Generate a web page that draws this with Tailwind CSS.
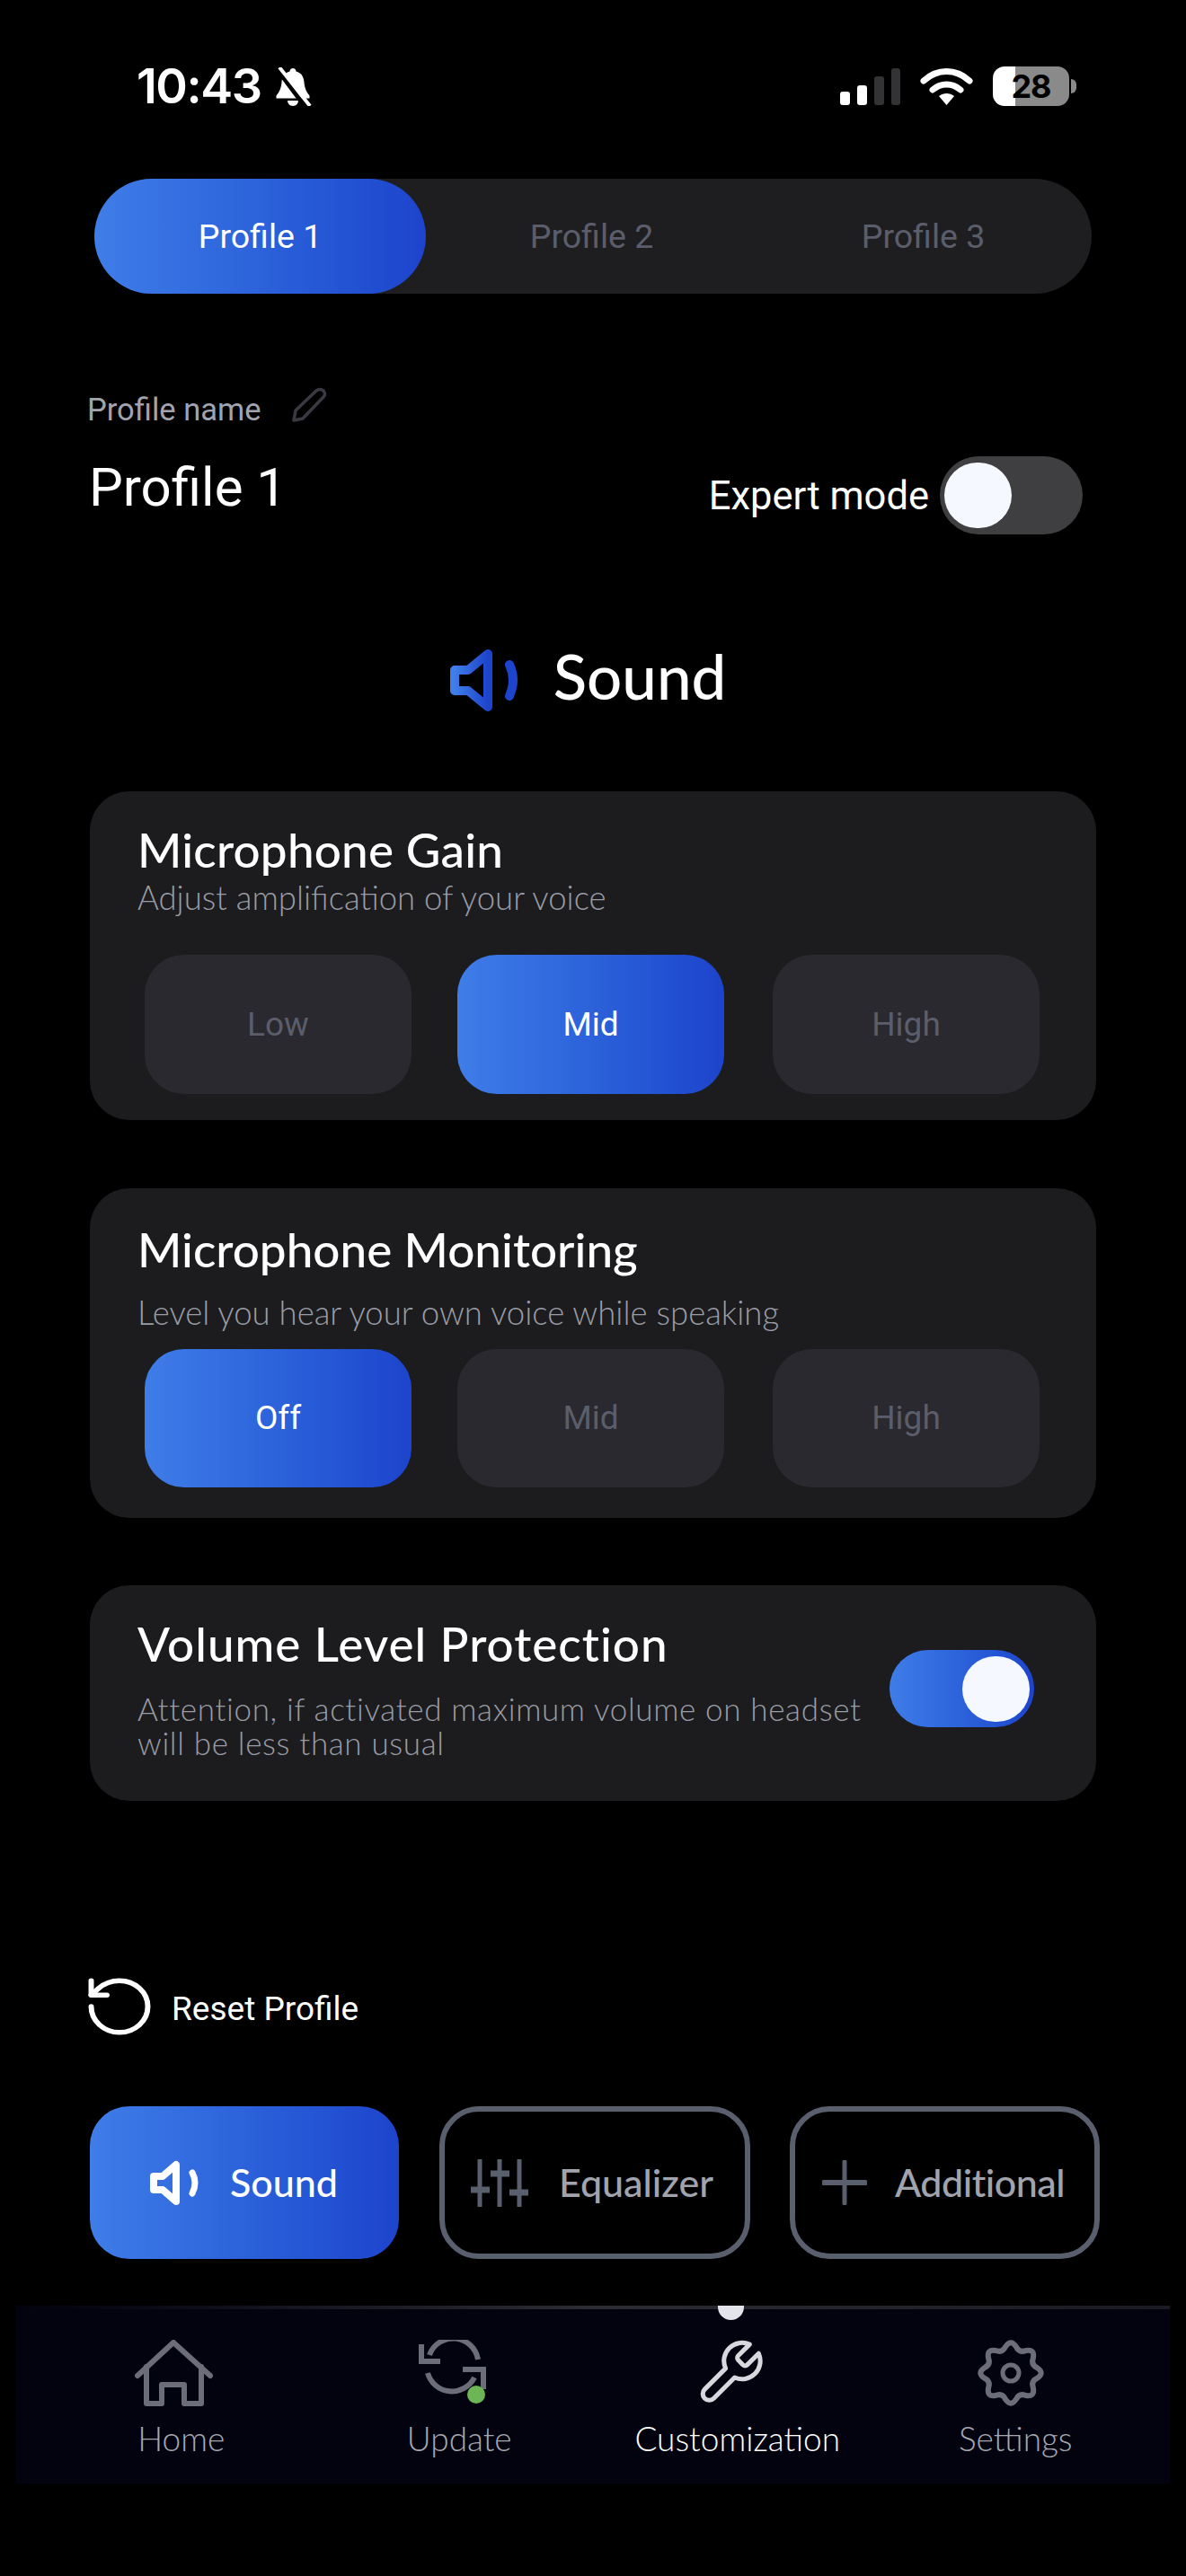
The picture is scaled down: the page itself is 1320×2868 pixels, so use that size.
<!DOCTYPE html>
<html lang="en">
<head>
  <meta charset="UTF-8">
  <meta name="viewport" content="width=device-width, initial-scale=1.0">
  <title>Customization - Sound</title>
  <script src="https://cdn.jsdelivr.net/npm/@tailwindcss/browser@4"></script>
</head>
<body class="bg-black font-['Roboto',sans-serif] text-white">
  <svg class="absolute w-0 h-0">
    <defs>
      <linearGradient id="blue" x1="0" y1="0" x2="1" y2="0">
        <stop offset="0" stop-color="#3f7de8"/>
        <stop offset="1" stop-color="#1d44cc"/>
      </linearGradient>
    </defs>
  </svg>
  <div class="w-[1320px] h-[2868px] overflow-hidden flex flex-col">

    <!-- status bar -->
    <div class="h-[199px] flex items-start justify-between pl-[152px] pr-[122px] pt-[70px]">
      <div class="flex items-center gap-[14px] h-[52px]">
        <span class="font-['Inter',sans-serif] font-semibold text-[54px] leading-[52px] tracking-[-1.500px]">10:43</span>
        <svg class="w-[42px] h-[43px]" viewBox="0 0 42 43">
          <path d="M21 1c2 0 3.500 1.500 3.500 3.500 6 1.500 8.500 6 9 12 .5 6 2 10 6 15v3H2.500v-3c4-5 5.500-9 6-15 .5-6 3-10.500 9-12C17.500 2.500 19 1 21 1z" fill="#fff"/>
          <path d="M15 37h12c0 3-2.500 6-6 6s-6-3-6-6z" fill="#fff"/>
          <path d="M2 0 34 43" stroke="#000" stroke-width="5"/>
          <path d="M6 0 40 43" stroke="#fff" stroke-width="4"/>
        </svg>
      </div>
      <div class="flex items-start gap-[22px]">
        <div class="flex items-end gap-[8px] h-[41px] mt-[6px]">
          <div class="w-[11px] h-[15px] rounded-[3px] bg-white"></div>
          <div class="w-[11px] h-[22px] rounded-[3px] bg-white"></div>
          <div class="w-[11px] h-[32px] rounded-[3px] bg-[#333336]"></div>
          <div class="w-[10px] h-[41px] rounded-[3px] bg-[#333336]"></div>
        </div>
        <svg class="w-[59px] h-[42px] mt-[5px]" viewBox="0 0 59 42">
          <path d="M4 15C19 1 40 1 55 15" fill="none" stroke="#fff" stroke-width="7" stroke-linecap="round"/>
          <path d="M14 25c9-8 22-8 31 0" fill="none" stroke="#fff" stroke-width="7" stroke-linecap="round"/>
          <path d="M21 32c5-4 12-4 17 0L29.500 42z" fill="#fff"/>
        </svg>
        <div class="flex items-center mt-[4px]">
          <div class="w-[85px] h-[44px] rounded-[13px] bg-[linear-gradient(90deg,#fff_0,#fff_30%,#8a8a8a_30%)] flex items-center justify-center font-['Inter',sans-serif] font-bold text-[36px] leading-none text-black tracking-[-1px]">28</div>
          <div class="w-[6px] h-[16px] ml-[2px] rounded-r-full bg-[#8a8a8a]"></div>
        </div>
      </div>
    </div>

    <!-- profile tabs -->
    <div class="ml-[105px] w-[1110px] h-[128px] rounded-[64px] bg-[#1e1e21] flex items-center text-[37.500px] text-[#5b5e6a]">
      <div class="w-[369px] h-full rounded-[64px] bg-linear-to-r from-[#3f7de8] to-[#1d44cc] text-white flex items-center justify-center">Profile 1</div>
      <div class="w-[369px] text-center">Profile 2</div>
      <div class="w-[369px] text-center">Profile 3</div>
    </div>

    <!-- profile name -->
    <div class="mt-[104px] ml-[97px] w-[1108px] h-[164px] flex justify-between">
      <div>
        <div class="flex items-end h-[40px] gap-[33px]">
          <span class="text-[34.500px] leading-[40px] text-[#a2a4ad] translate-y-[5px]">Profile name</span>
          <svg class="w-[40px] h-[40px]" viewBox="0 0 40 40">
            <path d="M3 37 5 26 28 4q4-3 8 0 3 4 0 7L13 35z" fill="none" stroke="#3a3b42" stroke-width="3.500" stroke-linejoin="round"/>
          </svg>
        </div>
        <div class="mt-[39px] ml-[2px] text-[60px] leading-[66px] font-normal">Profile 1</div>
      </div>
      <div class="flex items-end gap-[12px]">
        <span class="text-[43.500px] leading-[60px] mb-[12px]">Expert mode</span>
        <div class="w-[159px] h-[87px] rounded-full bg-[#3f3f42] flex items-center pl-[5px]">
          <div class="w-[75px] h-[73px] rounded-full bg-[#f5f8fe]"></div>
        </div>
      </div>
    </div>

    <!-- section title -->
    <div class="mt-[127px] h-[71px] flex items-center justify-center gap-[39px] pr-[11px]">
      <svg class="w-[76px] h-[71px]" viewBox="0 0 76 71">
        <path d="M5 24H20L42 6V65L20 47H5z" fill="none" stroke="url(#blue)" stroke-width="10" stroke-linejoin="round"/>
        <path d="M66 18q8 17 0 35" fill="none" stroke="#1d44cc" stroke-width="10" stroke-linecap="round"/>
      </svg>
      <span class="font-['Lato',sans-serif] font-medium text-[69px] leading-[71px] -translate-y-[5px]">Sound</span>
    </div>

    <!-- Microphone Gain -->
    <div class="mt-[88px] ml-[100px] w-[1120px] h-[366px] rounded-[44px] bg-[#1c1c1f] pl-[53px] pt-[39px]">
      <div class="font-['Lato',sans-serif] font-medium text-[53px] leading-[52px] tracking-[0.200px]">Microphone Gain</div>
      <div class="mt-[9px] font-['Lato',sans-serif] font-light text-[36.500px] leading-[36px] text-[#9a9ca5]">Adjust amplification of your voice</div>
      <div class="mt-[46px] ml-[8px] flex text-[37px]">
        <div class="w-[297px] h-[155px] rounded-[44px] bg-[#29292f] text-[#5b5e6a] flex items-center justify-center">Low</div>
        <div class="ml-[51px] w-[297px] h-[155px] rounded-[44px] bg-linear-to-r from-[#3f7de8] to-[#1d44cc] flex items-center justify-center">Mid</div>
        <div class="ml-[54px] w-[297px] h-[155px] rounded-[44px] bg-[#29292f] text-[#5b5e6a] flex items-center justify-center">High</div>
      </div>
    </div>

    <!-- Microphone Monitoring -->
    <div class="mt-[76px] ml-[100px] w-[1120px] h-[367px] rounded-[44px] bg-[#1c1c1f] pl-[53px] pt-[38px]">
      <div class="font-['Lato',sans-serif] font-medium text-[53px] leading-[60px]">Microphone Monitoring</div>
      <div class="mt-[20px] font-['Lato',sans-serif] font-light text-[36.500px] leading-[40px] text-[#9a9ca5]">Level you hear your own voice while speaking</div>
      <div class="mt-[21px] ml-[8px] flex text-[37px]">
        <div class="w-[297px] h-[154px] rounded-[44px] bg-linear-to-r from-[#3f7de8] to-[#1d44cc] flex items-center justify-center">Off</div>
        <div class="ml-[51px] w-[297px] h-[154px] rounded-[44px] bg-[#29292f] text-[#5b5e6a] flex items-center justify-center">Mid</div>
        <div class="ml-[54px] w-[297px] h-[154px] rounded-[44px] bg-[#29292f] text-[#5b5e6a] flex items-center justify-center">High</div>
      </div>
    </div>

    <!-- Volume Level Protection -->
    <div class="mt-[75px] ml-[100px] w-[1120px] h-[240px] rounded-[44px] bg-[#1c1c1f] pl-[53px] pt-[35px] pr-[69px] flex justify-between">
      <div>
        <div class="font-['Lato',sans-serif] font-medium text-[53px] leading-[60px] tracking-[1px]">Volume Level Protection</div>
        <div class="mt-[23px] font-['Lato',sans-serif] font-light text-[35px] leading-[38px] tracking-[0.650px] text-[#9a9ca5]">Attention, if activated maximum volume on headset<br>will be less than usual</div>
      </div>
      <div class="mt-[37px] w-[161px] h-[86px] rounded-full bg-linear-to-r from-[#3f7de8] to-[#1d44cc] flex items-center justify-end pr-[5px]">
        <div class="w-[75px] h-[73px] rounded-full bg-[#f5f8fe]"></div>
      </div>
    </div>

    <!-- reset -->
    <div class="mt-[197px] ml-[98px] h-[64px] flex items-center gap-[23px]">
      <svg class="w-[70px] h-[64px]" viewBox="2 2 20 20" preserveAspectRatio="none" fill="none" stroke="#fff" stroke-width="1.700" stroke-linecap="round" stroke-linejoin="round">
        <path d="M3 12a9 9 0 1 0 9-9 9.750 9.750 0 0 0-6.740 2.740L3 8"/>
        <path d="M3 3v5h5"/>
      </svg>
      <span class="text-[37px] leading-[44px] translate-y-[3px]">Reset Profile</span>
    </div>

    <!-- section tabs -->
    <div class="mt-[79px] ml-[100px] flex h-[170px] font-['Lato',sans-serif] font-medium text-[43px]">
      <div class="w-[344px] h-full rounded-[44px] bg-linear-to-r from-[#3f7de8] to-[#1d44cc] flex items-center pl-[67px] gap-[34px]">
        <svg class="w-[55px] h-[51px]" viewBox="0 0 55 51">
          <path d="M4 18H14L29 5V46L14 33H4z" fill="none" stroke="#fff" stroke-width="8" stroke-linejoin="round"/>
          <path d="M47 14q6 11 0 23" fill="none" stroke="#fff" stroke-width="7" stroke-linecap="round"/>
        </svg>
        <span>Sound</span>
      </div>
      <div class="ml-[45px] w-[346px] h-full rounded-[44px] border-[6px] border-[#5a5f6e] text-[#a2a4ad] flex items-center pl-[29px] gap-[34px]">
        <svg class="w-[64px] h-[53px]" viewBox="0 0 64 53" fill="none" stroke="#5a5f6e">
          <path d="M10 0V53M32 0V53M54 0V53" stroke-width="5"/>
          <path d="M0 34H21M22 16H43M43 37H64" stroke-width="7"/>
        </svg>
        <span>Equalizer</span>
      </div>
      <div class="ml-[44px] w-[345px] h-full rounded-[44px] border-[6px] border-[#5a5f6e] text-[#a2a4ad] flex items-center pl-[30px] gap-[31px]">
        <svg class="w-[50px] h-[50px]" viewBox="0 0 50 50" fill="none" stroke="#5a5f6e" stroke-linecap="round">
          <path d="M25 2V48" stroke-width="5"/>
          <path d="M2 25H48" stroke-width="6"/>
        </svg>
        <span class="tracking-[-0.500px]">Additional</span>
      </div>
    </div>

    <!-- bottom nav -->
    <div class="mt-[52px] ml-[18px] w-[1284px] h-[198px] relative bg-[#03030f]">
      <div class="h-[4px] bg-linear-to-r from-[#03030f] via-[#2c2c32] to-[#1a1a22]"></div>
      <div class="absolute left-[781px] top-0 w-[29px] h-[16px] rounded-b-full bg-[#e4e5ea]"></div>
      <div class="flex pl-[29px] pt-[34px] font-['Lato',sans-serif] font-light text-[37px] leading-[44px] text-[#a6a8b0]">
        <div class="w-[309.500px] flex flex-col items-center">
          <div class="h-[74px] pr-[16px]">
            <svg class="w-[87px] h-[74px]" viewBox="0 0 87 74" fill="none" stroke="#6b6d78" stroke-width="6" stroke-linecap="round" stroke-linejoin="round">
              <path d="M3 40 43 3 84 40"/>
              <path d="M13 30V71H30V50H55V71H74V30"/>
            </svg>
          </div>
          <span class="mt-[14px]">Home</span>
        </div>
        <div class="w-[309.500px] flex flex-col items-center">
          <div class="h-[74px] pr-[16px] relative">
            <svg class="w-[75px] h-[62px]" viewBox="0 0 75 62" fill="none" stroke="#6b6d78" stroke-width="6">
              <path d="M66 22A28 28 0 0 0 12 17"/>
              <path d="M3 5V24H24"/>
              <path d="M10 37A28 28 0 0 0 62 42"/>
              <path d="M49 33H72V55"/>
            </svg>
            <div class="absolute left-[54px] top-[51px] w-[20px] h-[20px] rounded-full bg-[#6cb655]"></div>
          </div>
          <span class="mt-[14px]">Update</span>
        </div>
        <div class="w-[309.500px] flex flex-col items-center text-white">
          <div class="h-[74px] pr-[16px]">
            <svg class="w-[75px] h-[74px]" viewBox="1 1 22 22" fill="none" stroke="#d8d9de" stroke-width="1.500" stroke-linecap="round" stroke-linejoin="round">
              <path d="M14.700 6.300a1 1 0 0 0 0 1.400l1.600 1.600a1 1 0 0 0 1.400 0l3.770-3.770a6 6 0 0 1-7.940 7.940l-6.910 6.910a2.120 2.120 0 0 1-3-3l6.910-6.910a6 6 0 0 1 7.940-7.940l-3.760 3.760z"/>
            </svg>
          </div>
          <span class="mt-[14px]">Customization</span>
        </div>
        <div class="w-[309.500px] flex flex-col items-center">
          <div class="h-[74px] pr-[10px]">
            <svg class="w-[74px] h-[74px]" viewBox="0 0 74 74" fill="none" stroke="#6b6d78">
              <path stroke-width="6" d="M31.150 7.580Q37 -1 42.850 7.580 46.180 14.830 53.670 12.070 63.870 10.130 61.940 20.330 59.170 27.820 66.420 31.150 75 37 66.420 42.850 59.170 46.180 61.940 53.670 63.870 63.870 53.670 61.940 46.180 59.170 42.850 66.420 37 75 31.150 66.420 27.820 59.170 20.330 61.940 10.130 63.870 12.060 53.670 14.830 46.180 7.580 42.850 -1 37 7.580 31.150 14.830 27.820 12.060 20.330 10.130 10.130 20.330 12.060 27.820 14.830 31.150 7.580z"/>
              <circle cx="37" cy="37" r="9" stroke-width="5"/>
            </svg>
          </div>
          <span class="mt-[14px]">Settings</span>
        </div>
      </div>
    </div>
  </div>
</body>
</html>
